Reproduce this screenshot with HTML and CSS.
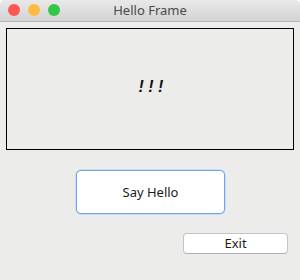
FILE: index.html
```html
<!DOCTYPE html>
<html>
<head>
<meta charset="utf-8">
<link rel="stylesheet" href="styles.css">
</head>
<body>
<div class="window">
  <div class="titlebar">
    <div class="lights">
      <span class="light red"></span>
      <span class="light yellow"></span>
      <span class="light green"></span>
    </div>
    <div class="title">Hello Frame</div>
  </div>
  <div class="content">
    <div class="panel"><span class="bang">! ! !</span></div>
    <div class="row-hello"><button class="btn hello">Say Hello</button></div>
    <div class="row-exit"><button class="btn exit">Exit</button></div>
  </div>
</div>
</body>
</html>
```
FILE: styles.css
```css
html, body {
  margin: 0;
  padding: 0;
  background: #ffffff;
}
body {
  width: 300px;
  height: 280px;
  overflow: hidden;
  font-family: "Liberation Sans", Arial, sans-serif;
}
.window {
  width: 300px;
  height: 280px;
  background: #ececea;
  border-radius: 5px 5px 0 0;
  overflow: hidden;
  display: flex;
  flex-direction: column;
}
.titlebar {
  height: 21px;
  flex: none;
  background: linear-gradient(#e9e9e9, #d3d3d3);
  border-bottom: 1px solid #b5b5b5;
  position: relative;
  display: flex;
  align-items: center;
  justify-content: center;
}
.lights {
  position: absolute;
  left: 8px;
  top: 4px;
  display: flex;
  gap: 8px;
}
.light {
  width: 12px;
  height: 12px;
  border-radius: 50%;
  display: block;
}
.red { background: #fc5753; }
.yellow { background: #fdbc40; }
.green { background: #33c748; }
.title {
  font-family: "Noto Sans", "Liberation Sans", sans-serif;
  font-size: 13px;
  color: #4a4a4a;
  line-height: 21px;
}
.content {
  flex: 1;
  display: flex;
  flex-direction: column;
  padding: 6px 6px 0 6px;
}
.panel {
  height: 120px;
  border: 1px solid #000;
  display: flex;
  align-items: center;
  justify-content: center;
}
.bang {
  font-family: "Liberation Sans", Arial, sans-serif;
  font-style: italic;
  font-weight: bold;
  font-size: 16px;
  color: #111;
  white-space: pre;
  margin-top: -4px;
  margin-left: 2px;
}
.row-hello {
  display: flex;
  padding-left: 70px;
  margin-top: 20px;
}
.btn {
  background: #ffffff;
  font-family: "Noto Sans", "Liberation Sans", sans-serif;
  font-size: 13px;
  color: #1a1a1a;
  padding: 0;
  margin: 0;
}
.hello {
  width: 149px;
  height: 44px;
  border: 1px solid #6aa6ee;
  box-shadow: 0 0 0 0.5px #a8cbf5;
  border-radius: 5px;
}
.row-exit {
  display: flex;
  padding-left: 177px;
  margin-top: 19px;
}
.exit {
  width: 105px;
  height: 21px;
  border: 1px solid #c4c4c4;
  border-bottom-color: #b0b0b0;
  border-radius: 4px;
  line-height: 19px;
}
```
